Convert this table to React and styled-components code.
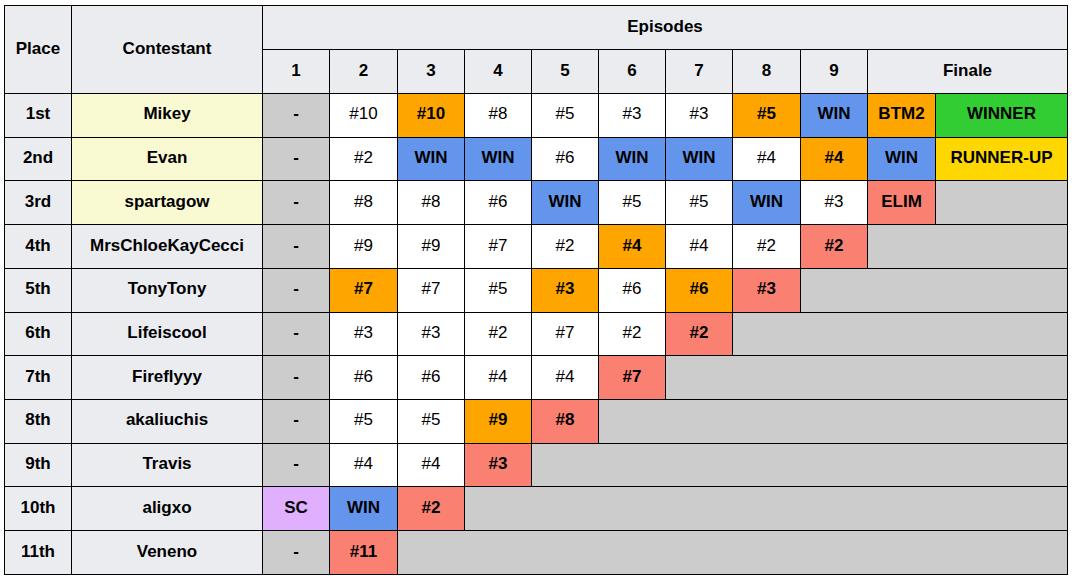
import styled, { createGlobalStyle } from 'styled-components'

const GlobalStyle = createGlobalStyle`
    html, body {
        margin: 0;
        padding: 0;
        background: #ffffff;
    }
    body {
        font-family: "Liberation Sans", Arial, sans-serif;
        color: #000000;
    }
`

const Page = styled.div`
    padding: 5px 4px;
`

const Table = styled.table`
    width: 1064px;
    table-layout: fixed;
    border-collapse: collapse;
    font-size: 17px;
    text-align: center;
    background: #ffffff;
`

const HeadRow = styled.tr`
    height: 44px;
`

const Row = styled.tr`
    height: 43.73px;
`

const Th = styled.th`
    border: 1px solid #000000;
    background: #eaecf0;
    font-weight: bold;
    padding: 0 4px 2px;
    white-space: nowrap;
`

const Td = styled.td`
    border: 1px solid #000000;
    background: ${ p => p.$bg || `#ffffff` };
    font-weight: ${ p => p.$bold ? `bold` : `normal` };
    padding: 0 4px 2px;
    white-space: nowrap;
`

const colours = {
    gray: `#cccccc`,
    orange: `#ffa500`,
    blue: `#6495ed`,
    salmon: `#fa8072`,
    green: `#32cd32`,
    gold: `#ffd700`,
    mauve: `#e0b0ff`,
    yellow: `#fafad2`,
    head: `#eaecf0`,
}

const widths = [ 67, 191, 67, 68, 67, 67, 67, 67, 67, 68, 67, 68, 132 ]

// cell shorthand: [ text, colour ] ; colour null = plain white cell
const rows = [
    { place: `1st`, name: `Mikey`, top: true, cells: [
        [ `-`, `gray` ], [ `#10` ], [ `#10`, `orange` ], [ `#8` ], [ `#5` ], [ `#3` ], [ `#3` ],
        [ `#5`, `orange` ], [ `WIN`, `blue` ], [ `BTM2`, `orange` ], [ `WINNER`, `green` ],
    ] },
    { place: `2nd`, name: `Evan`, top: true, cells: [
        [ `-`, `gray` ], [ `#2` ], [ `WIN`, `blue` ], [ `WIN`, `blue` ], [ `#6` ], [ `WIN`, `blue` ],
        [ `WIN`, `blue` ], [ `#4` ], [ `#4`, `orange` ], [ `WIN`, `blue` ], [ `RUNNER-UP`, `gold` ],
    ] },
    { place: `3rd`, name: `spartagow`, top: true, cells: [
        [ `-`, `gray` ], [ `#8` ], [ `#8` ], [ `#6` ], [ `WIN`, `blue` ], [ `#5` ], [ `#5` ],
        [ `WIN`, `blue` ], [ `#3` ], [ `ELIM`, `salmon` ],
    ] },
    { place: `4th`, name: `MrsChloeKayCecci`, cells: [
        [ `-`, `gray` ], [ `#9` ], [ `#9` ], [ `#7` ], [ `#2` ], [ `#4`, `orange` ], [ `#4` ],
        [ `#2` ], [ `#2`, `salmon` ],
    ] },
    { place: `5th`, name: `TonyTony`, cells: [
        [ `-`, `gray` ], [ `#7`, `orange` ], [ `#7` ], [ `#5` ], [ `#3`, `orange` ], [ `#6` ],
        [ `#6`, `orange` ], [ `#3`, `salmon` ],
    ] },
    { place: `6th`, name: `Lifeiscool`, cells: [
        [ `-`, `gray` ], [ `#3` ], [ `#3` ], [ `#2` ], [ `#7` ], [ `#2` ], [ `#2`, `salmon` ],
    ] },
    { place: `7th`, name: `Fireflyyy`, cells: [
        [ `-`, `gray` ], [ `#6` ], [ `#6` ], [ `#4` ], [ `#4` ], [ `#7`, `salmon` ],
    ] },
    { place: `8th`, name: `akaliuchis`, cells: [
        [ `-`, `gray` ], [ `#5` ], [ `#5` ], [ `#9`, `orange` ], [ `#8`, `salmon` ],
    ] },
    { place: `9th`, name: `Travis`, cells: [
        [ `-`, `gray` ], [ `#4` ], [ `#4` ], [ `#3`, `salmon` ],
    ] },
    { place: `10th`, name: `aligxo`, cells: [
        [ `SC`, `mauve` ], [ `WIN`, `blue` ], [ `#2`, `salmon` ],
    ] },
    { place: `11th`, name: `Veneno`, cells: [
        [ `-`, `gray` ], [ `#11`, `salmon` ],
    ] },
]

const TOTAL_CELLS = 11

export default function App() {

    return <Page>
        <GlobalStyle />
        <Table>
            <colgroup>
                { widths.map( ( w, i ) => <col key={ i } style={ { width: w } } /> ) }
            </colgroup>
            <thead>
                <HeadRow>
                    <Th rowSpan={ 2 }>Place</Th>
                    <Th rowSpan={ 2 }>Contestant</Th>
                    <Th colSpan={ 11 }>Episodes</Th>
                </HeadRow>
                <HeadRow>
                    { [ 1, 2, 3, 4, 5, 6, 7, 8, 9 ].map( n => <Th key={ n }>{ n }</Th> ) }
                    <Th colSpan={ 2 }>Finale</Th>
                </HeadRow>
            </thead>
            <tbody>
                { rows.map( row => {
                    const rest = TOTAL_CELLS - row.cells.length
                    return <Row key={ row.place }>
                        <Td $bg={ colours.head } $bold>{ row.place }</Td>
                        <Td $bg={ row.top ? colours.yellow : colours.head } $bold>{ row.name }</Td>
                        { row.cells.map( ( [ text, colour ], i ) =>
                            <Td key={ i } $bg={ colour && colours[ colour ] } $bold={ !!colour }>{ text }</Td>
                        ) }
                        { rest > 0 && <Td colSpan={ rest } $bg={ colours.gray } /> }
                    </Row>
                } ) }
            </tbody>
        </Table>
    </Page>

}
